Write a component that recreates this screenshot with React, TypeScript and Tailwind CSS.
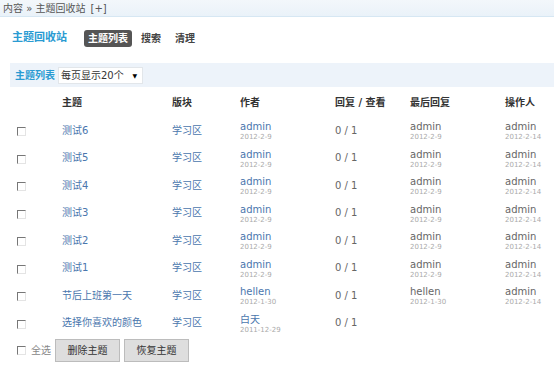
import React from 'react';

type Row = {
  title: string;
  author: string;
  authorDate: string;
  last?: string;
  lastDate?: string;
  op?: string;
  opDate?: string;
};

const rows: Row[] = [
  { title: '测试6', author: 'admin', authorDate: '2012-2-9', last: 'admin', lastDate: '2012-2-9', op: 'admin', opDate: '2012-2-14' },
  { title: '测试5', author: 'admin', authorDate: '2012-2-9', last: 'admin', lastDate: '2012-2-9', op: 'admin', opDate: '2012-2-14' },
  { title: '测试4', author: 'admin', authorDate: '2012-2-9', last: 'admin', lastDate: '2012-2-9', op: 'admin', opDate: '2012-2-14' },
  { title: '测试3', author: 'admin', authorDate: '2012-2-9', last: 'admin', lastDate: '2012-2-9', op: 'admin', opDate: '2012-2-14' },
  { title: '测试2', author: 'admin', authorDate: '2012-2-9', last: 'admin', lastDate: '2012-2-9', op: 'admin', opDate: '2012-2-14' },
  { title: '测试1', author: 'admin', authorDate: '2012-2-9', last: 'admin', lastDate: '2012-2-9', op: 'admin', opDate: '2012-2-14' },
  { title: '节后上班第一天', author: 'hellen', authorDate: '2012-1-30', last: 'hellen', lastDate: '2012-1-30', op: 'admin', opDate: '2012-2-14' },
  { title: '选择你喜欢的颜色', author: '白天', authorDate: '2011-12-29' },
];

const cols = 'grid grid-cols-[52px_110px_68px_95px_75px_95px_1fr]';

const Check = () => (
  <span className="ml-[7px] block h-[9px] w-[9px] border-t border-l border-t-[#777] border-l-[#777] border-r border-b border-r-[#e4e4e4] border-b-[#e4e4e4] bg-white" />
);

const Stack = ({ name, date, blue }: { name?: string; date?: string; blue?: boolean }) =>
  name ? (
    <div className="flex flex-col leading-none">
      <span className={`text-[10px] ${blue ? 'text-[#4a76ad]' : 'text-[#666]'}`}>{name}</span>
      <span className="mt-[2px] text-[7px] text-[#aaa]">{date}</span>
    </div>
  ) : null;

export default function App() {
  return (
    <div
      className="h-[368px] w-[554px] overflow-hidden bg-white"
      style={{ fontFamily: '"DejaVu Sans", "Noto Sans CJK SC", sans-serif' }}
    >
      <div className="flex h-[17px] items-center border-b border-[#d6e7f3] bg-gradient-to-b from-[#f3f7fb] to-[#eaf2f9] pl-[3px] text-[10px] text-[#555]">
        <span>内容 » 主题回收站</span>
        <span className="ml-[5px]">[+]</span>
      </div>

      <div className="mt-[13px] flex h-[16px] items-center pl-[12px]">
        <span className="text-[11px] font-bold text-[#2a9bd2]">主题回收站</span>
        <span className="ml-[17px] rounded-[3px] bg-[#555] px-[4px] py-[1px] text-[10px] font-bold text-white">主题列表</span>
        <span className="ml-[9px] text-[10px] font-bold text-[#444]">搜索</span>
        <span className="ml-[14px] text-[10px] font-bold text-[#444]">清理</span>
      </div>

      <div className="mt-[17px] ml-[10px] flex h-[24px] items-center bg-[#edf3fa] pl-[5px]">
        <span className="text-[10px] font-bold text-[#2a9bd2]">主题列表</span>
        <div className="ml-[3px] flex h-[17px] w-[85px] items-center justify-between border border-[#e2e6ea] bg-white pr-[5px] pl-[2px] text-[10px] text-[#333]">
          <span>每页显示20个</span>
          <span className="text-[6px] text-black">▼</span>
        </div>
      </div>

      <div className={`${cols} ml-[10px] h-[31px] items-center text-[10px] font-bold text-[#333]`}>
        <span />
        <span>主题</span>
        <span>版块</span>
        <span>作者</span>
        <span>回复 / 查看</span>
        <span>最后回复</span>
        <span>操作人</span>
      </div>

      {rows.map((r) => (
        <div key={r.title} className={`${cols} ml-[10px] h-[27.5px] items-center text-[10px]`}>
          <Check />
          <span className="-mt-[3px] text-[#4a76ad]">{r.title}</span>
          <span className="-mt-[3px] text-[#4a76ad]">学习区</span>
          <Stack name={r.author} date={r.authorDate} blue />
          <span className="-mt-[3px] text-[#666]">0 / 1</span>
          <Stack name={r.last} date={r.lastDate} />
          <Stack name={r.op} date={r.opDate} />
        </div>
      ))}

      <div className="mt-[1px] flex items-center pl-[17px] text-[10px]">
        <span className="block h-[9px] w-[9px] border-t border-l border-t-[#777] border-l-[#777] border-r border-b border-r-[#e4e4e4] border-b-[#e4e4e4] bg-white" />
        <span className="ml-[5px] text-[#888]">全选</span>
        <button className="ml-[4px] h-[23px] w-[65px] border border-[#bcbcbc] bg-[#dedede] text-[10px] text-[#333]">删除主题</button>
        <button className="ml-[4px] h-[23px] w-[65px] border border-[#bcbcbc] bg-[#dedede] text-[10px] text-[#333]">恢复主题</button>
      </div>
    </div>
  );
}
